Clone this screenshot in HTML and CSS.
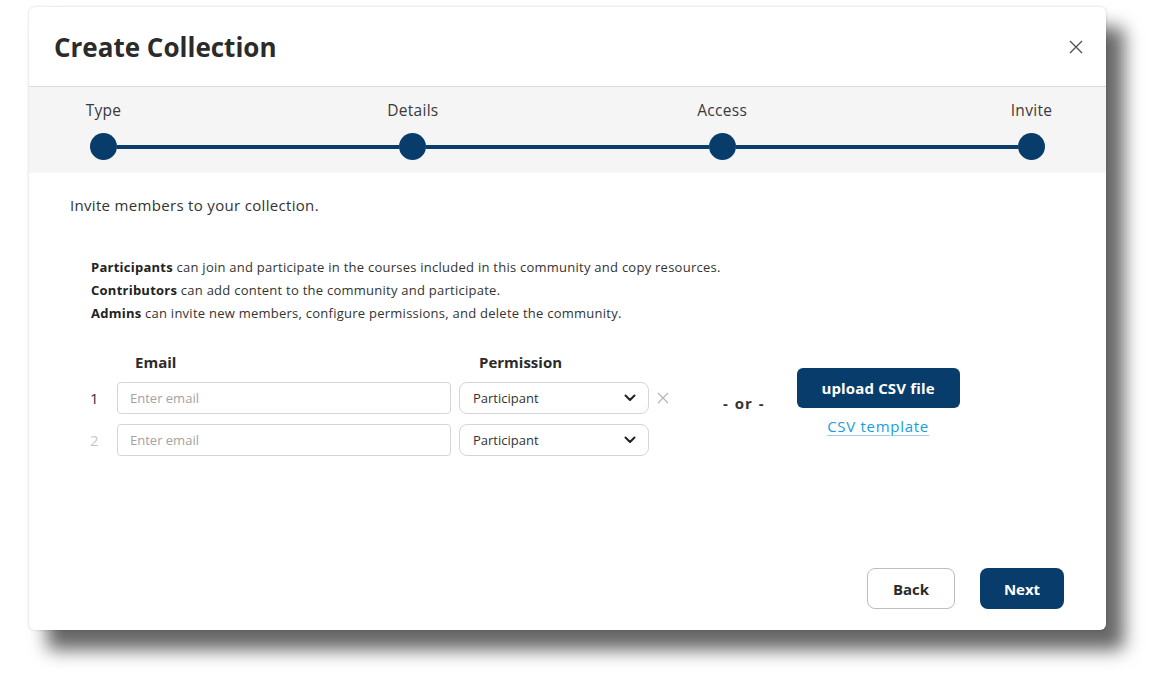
FILE: index.html
```html
<!DOCTYPE html>
<html>
<head>
<meta charset="utf-8">
<link rel="stylesheet" href="styles.css">
</head>
<body>
<div class="modal">
  <div class="modal-header">
    <h1 class="title">Create Collection</h1>
    <button class="close" aria-label="Close">
      <svg width="16" height="16" viewBox="0 0 16 16"><path d="M2 2 L14 14 M14 2 L2 14" stroke="#555" stroke-width="1.4" fill="none"/></svg>
    </button>
  </div>
  <div class="stepper">
    <div class="step"><span class="step-label">Type</span><span class="dot"></span></div>
    <div class="connector"></div>
    <div class="step"><span class="step-label">Details</span><span class="dot"></span></div>
    <div class="connector"></div>
    <div class="step"><span class="step-label">Access</span><span class="dot"></span></div>
    <div class="connector"></div>
    <div class="step"><span class="step-label">Invite</span><span class="dot"></span></div>
  </div>
  <div class="modal-body">
    <p class="intro">Invite members to your collection.</p>
    <div class="roles">
      <p><b>Participants</b> can join and participate in the courses included in this community and copy resources.</p>
      <p><b>Contributors</b> can add content to the community and participate.</p>
      <p><b>Admins</b> can invite new members, configure permissions, and delete the community.</p>
    </div>
    <div class="invite-area">
      <div class="invite-table">
        <div class="table-head">
          <span class="head-email">Email</span>
          <span class="head-perm">Permission</span>
        </div>
        <div class="row">
          <span class="num">1</span>
          <div class="input">Enter email</div>
          <div class="select"><span>Participant</span>
            <svg width="12" height="8" viewBox="0 0 12 8"><path d="M1.5 1.5 L6 6 L10.5 1.5" stroke="#222" stroke-width="2" fill="none" stroke-linecap="round" stroke-linejoin="round"/></svg>
          </div>
          <span class="remove"><svg width="12" height="12" viewBox="0 0 12 12"><path d="M1 1 L11 11 M11 1 L1 11" stroke="#b5b5b5" stroke-width="1.2" fill="none"/></svg></span>
        </div>
        <div class="row">
          <span class="num muted">2</span>
          <div class="input">Enter email</div>
          <div class="select"><span>Participant</span>
            <svg width="12" height="8" viewBox="0 0 12 8"><path d="M1.5 1.5 L6 6 L10.5 1.5" stroke="#222" stroke-width="2" fill="none" stroke-linecap="round" stroke-linejoin="round"/></svg>
          </div>
        </div>
      </div>
      <div class="or">- or -</div>
      <div class="upload">
        <button class="btn-primary upload-btn">upload CSV file</button>
        <a class="template-link" href="#">CSV template</a>
      </div>
    </div>
  </div>
  <div class="modal-footer">
    <button class="btn-outline">Back</button>
    <button class="btn-primary next-btn">Next</button>
  </div>
</div>
</body>
</html>
```
FILE: styles.css
```css
* { box-sizing: border-box; }
html, body { margin: 0; padding: 0; background: #fff; }
body {
  padding: 7px 0 56px 29px;
  min-height: 686px;
  font-family: "Open Sans", "Noto Sans", sans-serif;
  color: #333;
}
p { margin: 0; }
button { font-family: inherit; cursor: pointer; }

.modal {
  width: 1077px;
  height: 623px;
  background: #fff;
  border-radius: 6px;
  display: flex;
  flex-direction: column;
  box-shadow: 0 0 3px rgba(0,0,0,0.18), 18px 20px 18px rgba(0,0,0,0.6);
  overflow: hidden;
}

.modal-header {
  height: 80px;
  border-bottom: 1px solid #dcdcdc;
  display: flex;
  align-items: center;
  justify-content: space-between;
  padding: 0 22px 0 25px;
}
.title {
  margin: 0;
  font-size: 26px;
  font-weight: 700;
  color: #2b2b2b;
  letter-spacing: 0;
}
.close {
  background: none;
  border: 0;
  padding: 0;
  width: 16px;
  height: 16px;
  display: flex;
}

.stepper {
  background: #f5f5f5;
  height: 86px;
  padding: 13px 61px 0 61px;
  display: flex;
  align-items: flex-start;
}
.step {
  width: 27px;
  display: flex;
  flex-direction: column;
  align-items: center;
}
.step-label {
  white-space: nowrap;
  font-size: 15.5px;
  letter-spacing: 0.3px;
  line-height: 20px;
  color: #3a3a3a;
  height: 20px;
  margin-bottom: 13px;
}
.dot {
  width: 27px;
  height: 27px;
  border-radius: 50%;
  background: #083c6a;
  flex: none;
}
.connector {
  flex: 1;
  height: 4px;
  background: #0a3d6b;
  margin-top: 45px;
}

.modal-body {
  padding: 21px 0 0 41px;
}
.intro {
  font-size: 15px;
  letter-spacing: 0.32px;
  line-height: 22px;
  color: #333;
}
.roles {
  margin-top: 40px;
  padding-left: 21px;
  font-size: 13px;
  letter-spacing: 0.25px;
  line-height: 23px;
  color: #333;
}
.roles b { font-weight: 700; color: #222; }

.invite-area {
  margin-top: 26px;
  display: flex;
  align-items: flex-start;
}
.invite-table {
  padding-left: 18px;
}
.table-head {
  display: flex;
  font-size: 15px;
  font-weight: 700;
  line-height: 22px;
  color: #2b2b2b;
  margin-bottom: 9px;
}
.head-email { margin-left: 47px; width: 344px; }
.row {
  display: flex;
  align-items: center;
  height: 32px;
  margin-bottom: 10px;
}
.num {
  width: 29px;
  font-size: 15px;
  padding-left: 2px;
  color: #333;
}
.num.muted { color: #c8c8c8; }
.input {
  width: 334px;
  height: 32px;
  border: 1px solid #d5d5d5;
  border-radius: 4px;
  padding: 0 12px;
  display: flex;
  align-items: center;
  font-size: 13px;
  color: #a3a3a3;
}
.select {
  margin-left: 8px;
  width: 190px;
  height: 32px;
  border: 1px solid #d5d5d5;
  border-radius: 8px;
  padding: 0 12px 0 13px;
  display: flex;
  align-items: center;
  justify-content: space-between;
  font-size: 13px;
  color: #333;
}
.remove {
  margin-left: 8px;
  display: flex;
}

.or {
  margin-top: 42px;
  margin-left: 54px;
  font-size: 15px;
  font-weight: 700;
  letter-spacing: 1px;
  word-spacing: 1px;
  line-height: 20px;
  color: #333;
}
.upload {
  margin-left: 32px;
  margin-top: 17px;
  display: flex;
  flex-direction: column;
  align-items: center;
}
.btn-primary {
  background: #083c6a;
  color: #fff;
  border: 0;
  border-radius: 6px;
  font-size: 15px;
  font-weight: 700;
}
.upload-btn {
  width: 163px;
  height: 40px;
  letter-spacing: 0.15px;
}
.template-link {
  margin-top: 8px;
  font-size: 15px;
  letter-spacing: 0.7px;
  color: #1b9ddb;
  text-decoration: underline;
  text-decoration-color: #8fd0ee;
  text-underline-offset: 3px;
}

.modal-footer {
  margin-top: auto;
  padding: 0 42px 21px 0;
  display: flex;
  justify-content: flex-end;
  gap: 25px;
}
.btn-outline {
  width: 88px;
  height: 41px;
  background: #fff;
  border: 1px solid #bdbdbd;
  border-radius: 8px;
  font-size: 15px;
  font-weight: 700;
  color: #2b2b2b;
}
.next-btn {
  width: 84px;
  height: 41px;
  border-radius: 8px;
}
```
